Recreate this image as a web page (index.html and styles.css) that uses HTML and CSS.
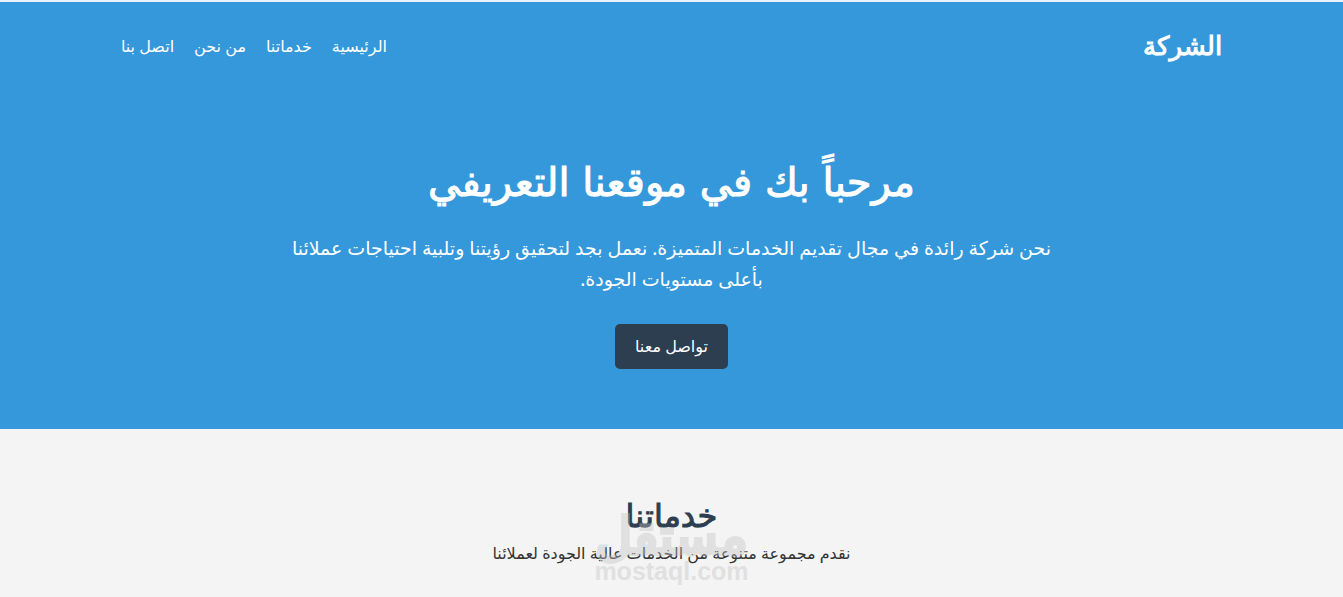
FILE: index.html
```html
<!DOCTYPE html>
<html lang="ar" dir="rtl">
<head>
    <meta charset="UTF-8">
    <meta name="viewport" content="width=device-width, initial-scale=1.0">
    <title>الشركة</title>
    <link rel="stylesheet" href="styles.css">
</head>
<body>
    <header>
        <div class="container">
            <div class="logo">الشركة</div>
            <nav>
                <ul>
                    <li><a href="#home">الرئيسية</a></li>
                    <li><a href="#services">خدماتنا</a></li>
                    <li><a href="#about">من نحن</a></li>
                    <li><a href="#contact">اتصل بنا</a></li>
                </ul>
            </nav>
        </div>
    </header>

    <section class="hero" id="home">
        <h1>مرحباً بك في موقعنا التعريفي</h1>
        <p>نحن شركة رائدة في مجال تقديم الخدمات المتميزة. نعمل بجد لتحقيق رؤيتنا وتلبية احتياجات عملائنا بأعلى مستويات الجودة.</p>
        <a href="#contact" class="btn">تواصل معنا</a>
    </section>

    <section class="services" id="services">
        <h2>خدماتنا</h2>
        <p>نقدم مجموعة متنوعة من الخدمات عالية الجودة لعملائنا</p>
        <div class="watermark">
            <span class="mark-ar">مستقل</span>
            <span class="mark-en" dir="ltr">mostaql.com</span>
        </div>
    </section>
</body>
</html>
```
FILE: styles.css
```css
*{
    margin: 0;
    padding: 0;
    box-sizing: border-box;
}
body{
    font-family: "Noto Sans", "DejaVu Sans", sans-serif;
    background-color: #f4f4f4;
    color: #333;
    line-height: 26px;
    border-top: 2px solid #e8f2fa;
}
header{
    background-color: #3498db;
    color: #fff;
    padding: 20px 0;
}
.container{
    width: 82%;
    margin: auto;
    display: flex;
    justify-content: space-between;
    align-items: center;
}
.logo, h1, h2{
    font-family: "DejaVu Sans", sans-serif;
    font-weight: normal;
    -webkit-text-stroke: 1px;
}
.logo{
    font-size: 26px;
    line-height: 48px;
}
nav ul{
    display: flex;
    gap: 20px;
    list-style: none;
}
nav a{
    color: #fff;
    text-decoration: none;
}
.hero{
    background-color: #3498db;
    color: #fff;
    text-align: center;
    padding: 60px 20px;
}
.hero h1{
    font-size: 40px;
    line-height: 64px;
}
.hero p{
    font-size: 19px;
    line-height: 31px;
    max-width: 800px;
    margin: 19px auto 29px;
}
.btn{
    display: inline-block;
    background-color: #2c3e50;
    color: #fff;
    padding: 10px 20px;
    line-height: 25px;
    border-radius: 5px;
    text-decoration: none;
}
.services{
    position: relative;
    text-align: center;
    padding: 64px 20px 20px;
}
.services h2{
    font-size: 32px;
    line-height: 47px;
    color: #2c3e50;
}

/* watermark */
.watermark{
    position: absolute;
    top: 86px;
    left: 0;
    right: 0;
    opacity: .4;
    color: #c4c4c4;
    pointer-events: none;
}
.watermark span{
    display: block;
}
.mark-ar{
    font-family: "DejaVu Sans", sans-serif;
    font-size: 51px;
    line-height: 43px;
    -webkit-text-stroke: 4px;
}
.mark-en{
    font-family: "Liberation Sans", sans-serif;
    font-size: 25px;
    font-weight: bold;
    line-height: 26px;
}
```
